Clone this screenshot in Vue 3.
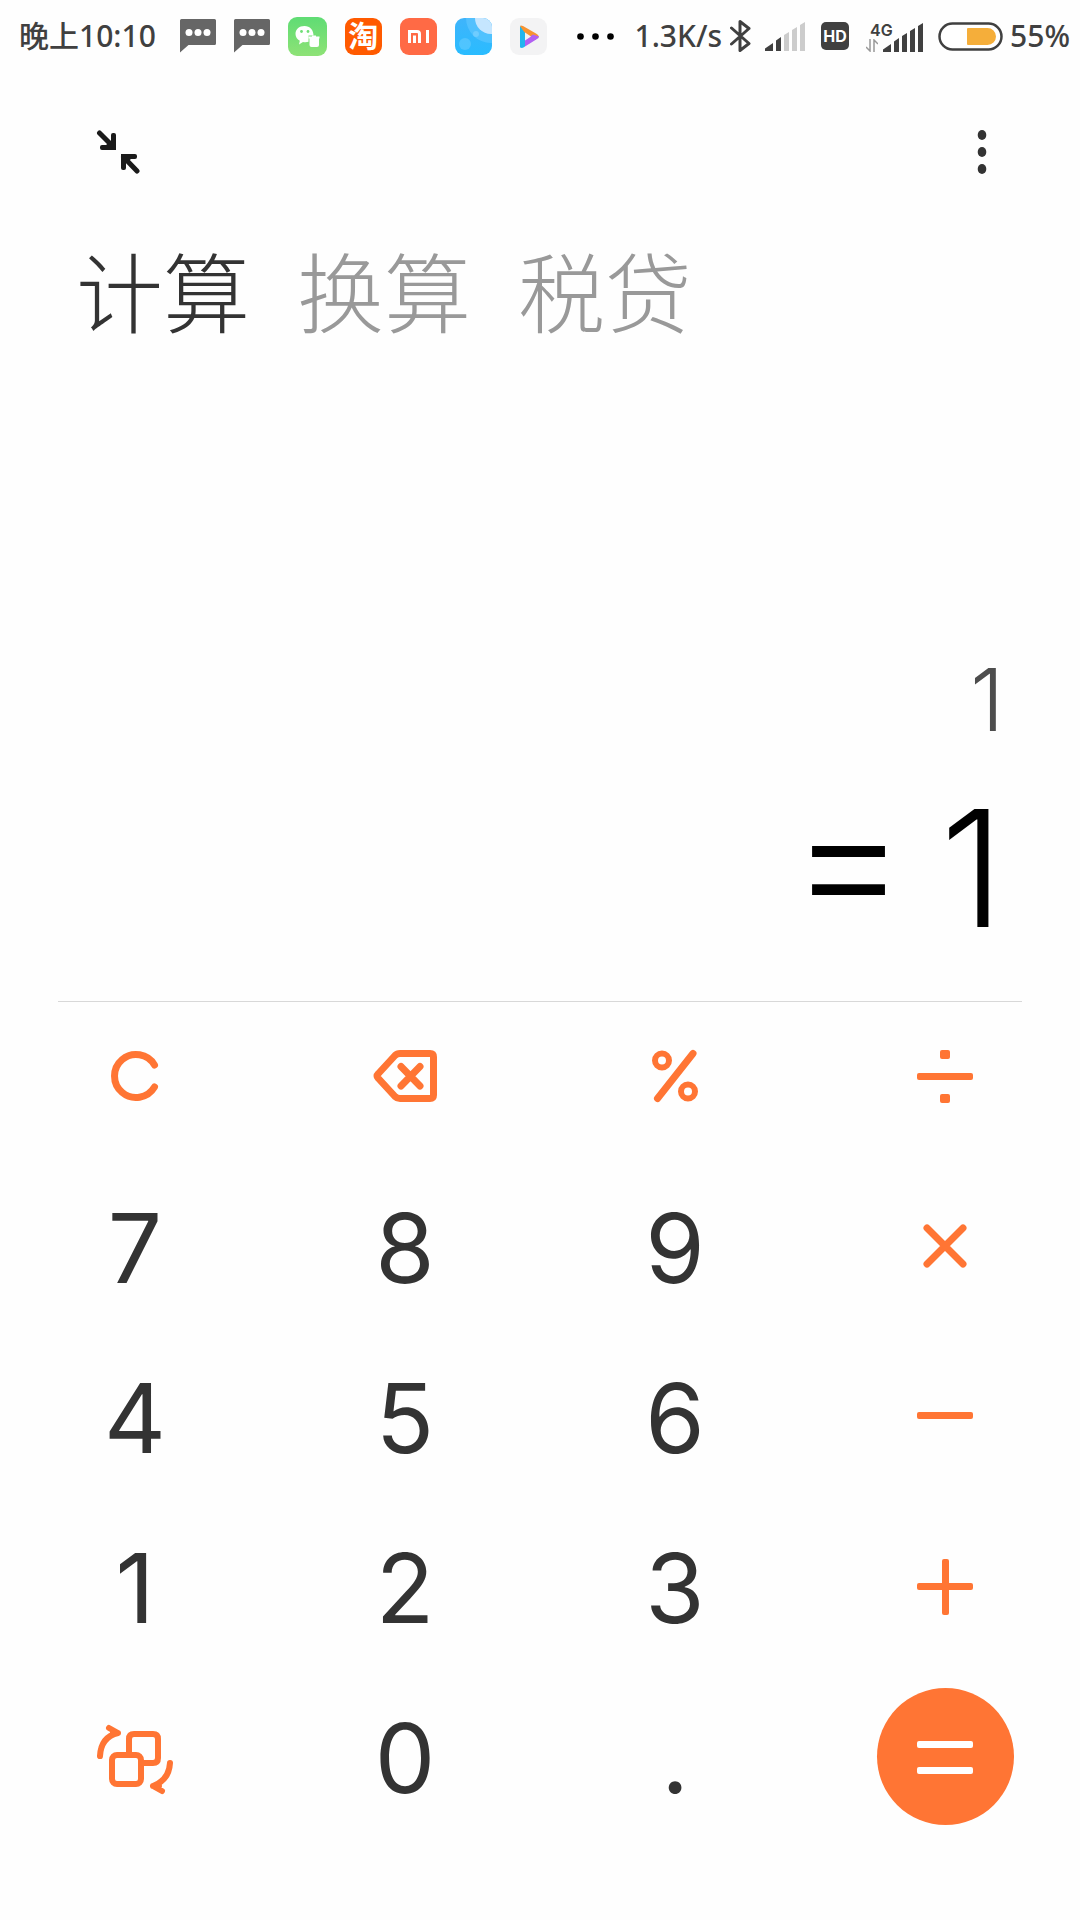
<script setup>
import { ref } from 'vue'

const tabs = ['计算', '换算', '税贷']
const activeTab = ref('计算')
const expression = ref('1')
const result = ref('1')

const keys = [
  { name: '清除', icon: 'clear' },
  { name: '退格', icon: 'backspace' },
  { name: '百分比', icon: 'percent' },
  { name: '除', icon: 'divide' },
  { digit: '7' },
  { digit: '8' },
  { digit: '9' },
  { name: '乘', icon: 'multiply' },
  { digit: '4' },
  { digit: '5' },
  { digit: '6' },
  { name: '减', icon: 'minus' },
  { digit: '1' },
  { digit: '2' },
  { digit: '3' },
  { name: '加', icon: 'plus' },
  { name: '科学计算', icon: 'switch' },
  { digit: '0' },
  { digit: '.' },
  { name: '等于', icon: 'equals' }
]
</script>

<template>
  <div class="screen">
    <header class="status">
      <div class="status-left">
        <span class="status-text clock">晚上10:10</span>
        <svg v-for="n in 2" :key="n" class="bubble" width="36" height="34" viewBox="0 0 36 34">
          <path d="M1.500 0H34.500Q36 0 36 1.500V24.500Q36 26 34.500 26H8.500L0 33.500V1.500Q0 0 1.500 0Z" fill="#666" />
          <circle cx="9" cy="13.500" r="3.500" fill="#fff" />
          <circle cx="18" cy="13.500" r="3.500" fill="#fff" />
          <circle cx="27" cy="13.500" r="3.500" fill="#fff" />
        </svg>
        <svg class="app wechat" width="39" height="39" viewBox="0 0 39 39">
          <defs>
            <linearGradient id="wechat" x1="0" y1="0" x2="0" y2="1">
              <stop offset="0" stop-color="#5fdc74" />
              <stop offset="1" stop-color="#8ee276" />
            </linearGradient>
          </defs>
          <rect width="39" height="39" rx="9" fill="url(#wechat)" />
          <path d="M16.500 9C11 9 7.500 12.500 7.500 17C7.500 20 9.200 22.300 11.800 23.800L11 27.500L15 25C17 25.500 19 25.300 20.500 24.800V18.500H25.500C25.500 13 22 9 16.500 9Z" fill="#fff" />
          <circle cx="13.500" cy="14.500" r="1.400" fill="#6fdf75" />
          <circle cx="20" cy="14.500" r="1.400" fill="#6fdf75" />
          <path d="M20.500 20.500H31.500M24 19.500H28" stroke="#fff" stroke-width="2" fill="none" />
          <path d="M21.500 21H31V28Q31 30 29 30H23.500Q21.500 30 21.500 28Z" fill="#fff" />
        </svg>
        <span class="app taobao">淘</span>
        <svg class="app" width="37" height="37" viewBox="0 0 37 37">
          <rect width="37" height="37" rx="9" fill="#ff6a45" />
          <path d="M9.500 25V13.500H17Q19.500 13.500 19.500 16V25M14.500 17.500V25M27.500 12V25" stroke="#fff" stroke-width="3" fill="none" />
        </svg>
        <svg class="app" width="37" height="37" viewBox="0 0 37 37">
          <defs>
            <linearGradient id="sky" x1="0" y1="0" x2="0" y2="1">
              <stop offset="0" stop-color="#3fb4fb" />
              <stop offset="1" stop-color="#29bcff" />
            </linearGradient>
            <clipPath id="skyclip"><rect width="37" height="37" rx="9" /></clipPath>
          </defs>
          <g clip-path="url(#skyclip)">
            <rect width="37" height="37" fill="url(#sky)" />
            <circle cx="36" cy="0" r="25" fill="#63c8ff" opacity=".6" />
            <circle cx="36" cy="0" r="16" fill="#c5e6ff" />
            <circle cx="10" cy="26" r="6" fill="#6fd0ff" opacity=".5" />
            <circle cx="21" cy="16" r="3" fill="#8ed8ff" opacity=".5" />
          </g>
        </svg>
        <svg class="app" width="37" height="37" viewBox="0 0 37 37">
          <rect width="37" height="37" rx="9" fill="#f3f3f4" />
          <path d="M10 8V29.500L15 27.500V12Z" fill="#22b5ee" />
          <path d="M10 8L15 15.500L25 22L29 18.500Q28 16.500 26 15.500L13 8Q10.500 7 10 8Z" fill="#f79331" />
          <path d="M29 18.500Q29 20 27 21L15 28.500V22L23 16.500Z" fill="#b160f2" />
          <path d="M15 14.500V22.500L21 18.500Z" fill="#f3f3f4" />
          <path d="M10 9V29Q12 31 15 28.500V15Z" fill="#22b5ee" />
        </svg>
        <svg class="more" width="37" height="7" viewBox="0 0 37 7">
          <circle cx="3.500" cy="3.500" r="3.300" />
          <circle cx="18.500" cy="3.500" r="3.300" />
          <circle cx="33.500" cy="3.500" r="3.300" />
        </svg>
      </div>
      <div class="status-right">
        <span class="status-text">1.3K/s</span>
        <svg class="bluetooth" width="21" height="34" viewBox="0 0 21 34">
          <path d="M1.500 9L19 24.500L10 31.500V2.500L19 9.500L1.500 25" fill="none" stroke="#404040" stroke-width="3" stroke-linecap="round" stroke-linejoin="round" />
        </svg>
        <svg class="signal" width="40" height="29" viewBox="0 0 40 29">
          <path d="M0 29V26.500L8 21V29ZM11 29V18.500L16 15V29Z" fill="#404040" />
          <path d="M19 29V13L24 10V29ZM27 29V8L32 5V29ZM35 29V3L40 0V29Z" fill="#ccc" />
        </svg>
        <span class="hd">HD</span>
        <div class="mobile">
          <div class="network">
            <span>4G</span>
            <svg width="12" height="13" viewBox="0 0 12 13">
              <path d="M4 0V12L0 8M8 13V1L12 5" fill="none" stroke="#999" stroke-width="1.500" />
            </svg>
          </div>
          <svg class="bars" width="40" height="29" viewBox="0 0 40 29">
            <path d="M0 29V26.500L8 21V29ZM11 29V18.500L16 15V29ZM19 29V13L24 10V29ZM27 29V8L32 5V29ZM35 29V3L40 0V29Z" fill="#404040" />
          </svg>
        </div>
        <svg class="battery" width="65" height="29" viewBox="0 0 65 29">
          <rect x="1.500" y="1.500" width="62" height="26" rx="13" fill="#fff" stroke="#404040" stroke-width="2.500" />
          <path d="M30 6H49.500A8.500 8.500 0 0 1 49.500 23H30Q29 23 29 22V7Q29 6 30 6Z" fill="#f5ae3a" />
        </svg>
        <span class="status-text">55%</span>
      </div>
    </header>

    <nav class="toolbar">
      <button type="button" aria-label="收起">
        <svg width="44" height="44" viewBox="0 0 44 44">
          <g fill="none" stroke="#1a1a1a" stroke-width="5" stroke-linecap="round">
            <path d="M3.500 3L17 16.500M41 41L27.500 27" />
          </g>
          <path d="M6 15H10L15 11V5Q15 3 17 3H18Q20 3 20 5V20H6Q4 20 4 18V17Q4 15 6 15ZM39 29H35L30 33V38Q30 40 28 40H27Q25 40 25 38V24H39Q41 24 41 26V27Q41 29 39 29Z" fill="#1a1a1a" />
        </svg>
      </button>
      <button type="button" aria-label="更多">
        <svg width="44" height="44" viewBox="0 0 44 44" fill="#333">
          <ellipse cx="22" cy="5" rx="4.300" ry="5" />
          <ellipse cx="22" cy="22" rx="4.300" ry="5" />
          <ellipse cx="22" cy="39" rx="4.300" ry="5" />
        </svg>
      </button>
    </nav>

    <div class="tabs" role="tablist">
      <button
        v-for="tab in tabs"
        :key="tab"
        type="button"
        role="tab"
        class="tab"
        :class="{ active: tab === activeTab }"
        :aria-selected="tab === activeTab"
        @click="activeTab = tab"
      >{{ tab }}</button>
    </div>

    <main class="display">
      <div class="expression">{{ expression }}</div>
      <output class="result"><span class="equals">=</span><span>{{ result }}</span></output>
    </main>

    <section class="keypad">
      <button
        v-for="key in keys"
        :key="key.digit || key.icon"
        type="button"
        class="key"
        :class="{ digit: key.digit, submit: key.icon === 'equals' }"
        :aria-label="key.name"
      >
        <template v-if="key.digit">{{ key.digit }}</template>
        <svg v-else width="80" height="80" viewBox="-40 -40 80 80" fill="none" stroke="currentColor" stroke-width="7" stroke-linecap="round" stroke-linejoin="round">
          <path v-if="key.icon === 'clear'" d="M19.500 -11A21.500 21.500 0 1 0 19.500 11" />
          <g v-else-if="key.icon === 'backspace'">
            <path d="M-5 -22.500H25Q28.500 -22.500 28.500 -19V19Q28.500 22.500 25 22.500H-5Q-8 22.500 -10 20.500L-27 2Q-29 0 -27 -2L-10 -20.500Q-8 -22.500 -5 -22.500Z" />
            <path d="M-4 -9.500L15 10M15 -9.500L-4 10" />
          </g>
          <g v-else-if="key.icon === 'percent'">
            <circle cx="-13" cy="-15.500" r="7" stroke-width="6" />
            <circle cx="13" cy="15.500" r="7" stroke-width="6" />
            <path d="M18 -22.500L-17.500 22.500" />
          </g>
          <g v-else-if="key.icon === 'divide'" fill="currentColor" stroke="none">
            <rect x="-28" y="-3" width="56" height="7" rx="2" />
            <rect x="-5" y="-26" width="10" height="9" rx="2" />
            <rect x="-5" y="18" width="10" height="9" rx="2" />
          </g>
          <path v-else-if="key.icon === 'multiply'" d="M-18 -18L18 18M18 -18L-18 18" />
          <rect v-else-if="key.icon === 'minus'" x="-28" y="-4" width="56" height="7" rx="2" fill="currentColor" stroke="none" />
          <g v-else-if="key.icon === 'plus'" fill="currentColor" stroke="none">
            <rect x="-28" y="-3" width="56" height="7" rx="2" />
            <rect x="-3" y="-27" width="7" height="56" rx="2" />
          </g>
          <g v-else-if="key.icon === 'switch'" stroke-width="6">
            <rect x="-23" y="-1" width="29" height="29" rx="5" />
            <path d="M-6 -2V-17Q-6 -22 -1 -22H18Q23 -22 23 -17V2Q23 7 18 7H8" />
            <path d="M-35 0Q-34 -19 -17 -23L-26 -28M-17 -23L-22 -24M35 7Q34 24 18 30L27 35M18 30L24 30" />
          </g>
          <g v-else fill="currentColor" stroke="none">
            <rect x="-28" y="-15" width="56" height="7" rx="2" />
            <rect x="-28" y="11" width="56" height="7" rx="2" />
          </g>
        </svg>
      </button>
    </section>
  </div>
</template>

<style>
body {
  margin: 0;
  background: #fefefe;
}
</style>

<style scoped>
.screen {
  display: flex;
  flex-direction: column;
  min-height: 100vh;
  box-sizing: border-box;
  padding-bottom: 90px;
  font-family: Inter, "Noto Sans CJK SC", sans-serif;
  color: #333;
}

svg {
  display: block;
}

button {
  margin: 0;
  padding: 0;
  border: 0;
  background: none;
  color: inherit;
  font-family: inherit;
  cursor: pointer;
}

.status {
  display: flex;
  justify-content: space-between;
  align-items: center;
  height: 72px;
  padding: 0 10px 0 19px;
  color: #404040;
}

.status-left,
.status-right {
  display: flex;
  align-items: center;
}

.status-left {
  gap: 18px;
}

.status-text {
  font-family: "Noto Sans", "Noto Sans CJK SC", sans-serif;
  font-size: 30px;
  line-height: 40px;
  font-weight: 500;
  white-space: nowrap;
}

.clock {
  margin-right: 6px;
}

.taobao {
  width: 37px;
  height: 37px;
  border-radius: 9px;
  background: #ff5a00;
  color: #fff;
  font-size: 30px;
  font-weight: 700;
  line-height: 36px;
  text-align: center;
}

.more {
  margin-left: 12px;
}

.bluetooth {
  margin-left: 8px;
}

.signal {
  margin-left: 14px;
}

.hd {
  width: 28px;
  height: 28px;
  margin-left: 16px;
  border-radius: 5px;
  background: #404040;
  color: #fff;
  font-size: 16px;
  font-weight: 700;
  line-height: 28px;
  text-align: center;
}

.mobile {
  display: flex;
  align-items: flex-end;
  margin-left: 17px;
}

.network {
  width: 17px;
  font-size: 16px;
  line-height: 18px;
  font-weight: 600;
}

.network span {
  margin-left: 4px;
}

.battery {
  margin: 0 7px 0 15px;
}

.toolbar {
  display: flex;
  justify-content: space-between;
  align-items: center;
  height: 160px;
  padding: 0 76px 0 96px;
}

.tabs {
  display: flex;
  gap: 47px;
  padding: 0 76px;
}

.tab {
  color: #999;
  font-family: "Noto Sans CJK SC", sans-serif;
  font-size: 87px;
  font-weight: 300;
  line-height: 114px;
}

.tab.active {
  color: #333;
}

.display {
  display: flex;
  flex: 1;
  flex-direction: column;
  justify-content: flex-end;
  align-items: flex-end;
  gap: 38px;
  margin: 0 58px;
  padding: 0 18px 53px;
  border-bottom: 1px solid #d8d8d8;
}

.expression {
  color: #4d4d4d;
  font-size: 86px;
  font-weight: 300;
  line-height: 100px;
}

.result {
  display: flex;
  gap: 48px;
  color: #000;
  font-size: 162px;
  font-weight: 300;
  line-height: 160px;
}

.equals {
  font-family: "Liberation Sans", sans-serif;
  font-size: 150px;
}

.keypad {
  display: grid;
  grid-template-columns: repeat(4, 1fr);
  grid-auto-rows: 148px;
  row-gap: 22px;
}

.key {
  display: flex;
  justify-content: center;
  align-items: center;
  color: #333;
  font-size: 96px;
  font-weight: 400;
}

.key.digit {
  padding-top: 4px;
}

.key svg {
  color: #ff7534;
}

.key.submit {
  place-self: center;
  width: 137px;
  height: 137px;
  border-radius: 50%;
  background: #ff7534;
}

.key.submit svg {
  color: #fff;
}
</style>
